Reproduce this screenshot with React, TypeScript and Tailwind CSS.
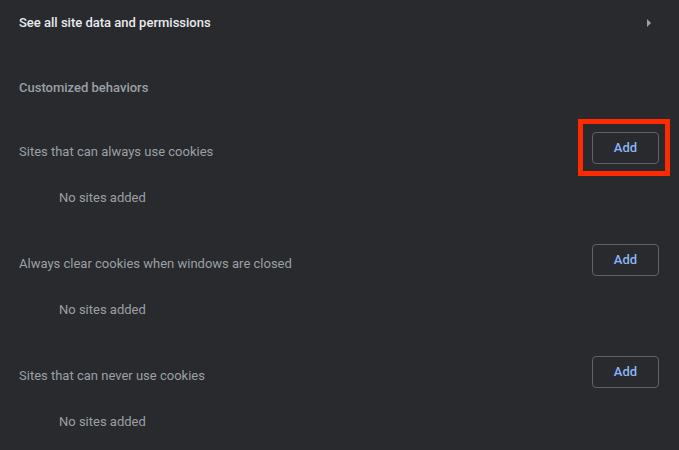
import React from "react";

const sections = [
  { title: "Sites that can always use cookies", highlight: true },
  { title: "Always clear cookies when windows are closed", highlight: false },
  { title: "Sites that can never use cookies", highlight: false },
];

function Section({ title, highlight }: { title: string; highlight: boolean }) {
  return (
    <div>
      <div className="flex items-center justify-between h-[64px] pl-[19px] pr-[20px]">
        <div className="text-[13px] text-[#9aa0a6]">{title}</div>
        <div className="relative mb-[8px]">
          <button className="w-[67px] h-[32px] rounded-[4px] border border-[#5f6368] text-[13px] font-medium text-[#8ab4f8]">
            Add
          </button>
          {highlight && (
            <div className="absolute left-[-14px] top-[-13px] w-[92px] h-[57px] border-[5px] border-[#ff2a00]"></div>
          )}
        </div>
      </div>
      <div className="h-[48px] pl-[59px] pt-[4px] text-[13px] text-[#9aa0a6]">No sites added</div>
    </div>
  );
}

function App() {
  return (
    <div className="w-[679px] h-[450px] bg-[#292a2d] overflow-hidden" style={{ fontFamily: "Roboto, 'Liberation Sans', sans-serif" }}>
      <div className="flex items-center justify-between h-[46px] pl-[19px] pr-[28px]">
        <div className="text-[13px] text-[#e8eaed] font-medium">See all site data and permissions</div>
        <svg width="4" height="8" viewBox="0 0 4 8">
          <path d="M0 0 L4 4 L0 8 Z" fill="#9aa0a6" />
        </svg>
      </div>
      <div className="h-[74px] pt-[32px] pl-[19px] text-[13px] font-medium text-[#9aa0a6]">Customized behaviors</div>
      {sections.map((s) => (
        <Section key={s.title} title={s.title} highlight={s.highlight} />
      ))}
    </div>
  );
}

export default App;
